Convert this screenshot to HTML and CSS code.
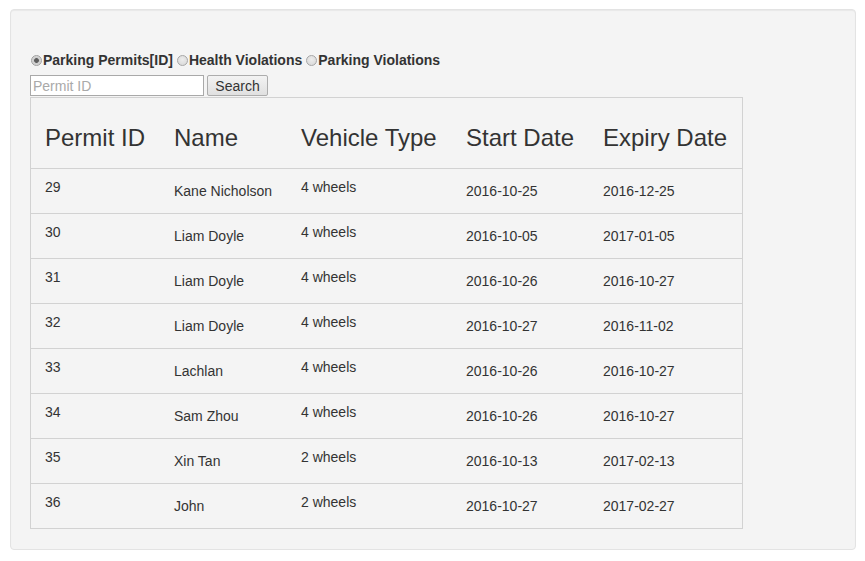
FILE: index.html
```html
<!DOCTYPE html>
<html>
<head>
<meta charset="utf-8">
<link rel="stylesheet" href="styles.css">
</head>
<body>
<div class="page">
  <div class="well">
    <form class="search-form">
      <div class="radios">
        <label class="opt"><input type="radio" name="kind" checked><span>Parking Permits[ID]</span></label>
        <label class="opt"><input type="radio" name="kind"><span>Health Violations</span></label>
        <label class="opt"><input type="radio" name="kind"><span>Parking Violations</span></label>
      </div>
      <div class="query">
        <input class="field" type="text" placeholder="Permit ID">
        <button class="btn" type="button">Search</button>
      </div>
    </form>
    <table class="permits">
      <colgroup>
        <col class="w1"><col class="w2"><col class="w3"><col class="w4"><col class="w5">
      </colgroup>
      <thead>
        <tr>
          <th class="c-id">Permit ID</th>
          <th>Name</th>
          <th class="c-type">Vehicle Type</th>
          <th>Start Date</th>
          <th>Expiry Date</th>
        </tr>
      </thead>
      <tbody>
        <tr><td class="c-id top">29</td><td class="mid">Kane Nicholson</td><td class="c-type top">4 wheels</td><td class="mid">2016-10-25</td><td class="mid">2016-12-25</td></tr>
        <tr><td class="c-id top">30</td><td class="mid">Liam Doyle</td><td class="c-type top">4 wheels</td><td class="mid">2016-10-05</td><td class="mid">2017-01-05</td></tr>
        <tr><td class="c-id top">31</td><td class="mid">Liam Doyle</td><td class="c-type top">4 wheels</td><td class="mid">2016-10-26</td><td class="mid">2016-10-27</td></tr>
        <tr><td class="c-id top">32</td><td class="mid">Liam Doyle</td><td class="c-type top">4 wheels</td><td class="mid">2016-10-27</td><td class="mid">2016-11-02</td></tr>
        <tr><td class="c-id top">33</td><td class="mid">Lachlan</td><td class="c-type top">4 wheels</td><td class="mid">2016-10-26</td><td class="mid">2016-10-27</td></tr>
        <tr><td class="c-id top">34</td><td class="mid">Sam Zhou</td><td class="c-type top">4 wheels</td><td class="mid">2016-10-26</td><td class="mid">2016-10-27</td></tr>
        <tr><td class="c-id top">35</td><td class="mid">Xin Tan</td><td class="c-type top">2 wheels</td><td class="mid">2016-10-13</td><td class="mid">2017-02-13</td></tr>
        <tr><td class="c-id top">36</td><td class="mid">John</td><td class="c-type top">2 wheels</td><td class="mid">2016-10-27</td><td class="mid">2017-02-27</td></tr>
      </tbody>
    </table>
  </div>
</div>
</body>
</html>
```

FILE: styles.css
```css
html, body {
  margin: 0;
  padding: 0;
  background: #ffffff;
}

body {
  font-family: "Liberation Sans", Arial, Helvetica, sans-serif;
  font-size: 14px;
  line-height: 20px;
  color: #333333;
}

.page {
  padding: 9px 9px 12px 10px;
}

.well {
  background: #f4f4f4;
  border: 1px solid #e3e3e3;
  border-radius: 4px;
  box-shadow: inset 0 1px 1px rgba(0, 0, 0, 0.05);
  padding: 40px 19px 20px 19px;
}

.search-form {
  margin: 0;
}

.radios {
  display: flex;
  align-items: center;
  height: 20px;
  font-weight: bold;
  color: #333333;
}

.opt {
  display: flex;
  align-items: center;
  margin-right: 3px;
}

.opt input {
  -webkit-appearance: none;
  appearance: none;
  width: 11px;
  height: 11px;
  margin: 0 1px 0 1px;
  border: 1px solid #a6a6a6;
  border-radius: 50%;
  background: radial-gradient(circle at 50% 40%, #ececec 0%, #d6d6d6 100%);
  box-sizing: border-box;
}

.opt input:checked {
  background: radial-gradient(circle, #5e5e5e 0, #5e5e5e 2px, #cbcbcb 2.8px, #e4e4e4 100%);
  border-color: #a0a0a0;
}

.query {
  display: flex;
  align-items: flex-start;
  gap: 3px;
  margin-top: 5px;
  height: 21px;
}

.field {
  width: 174px;
  height: 21px;
  box-sizing: border-box;
  border: 1px solid #a9a9a9;
  background: #ffffff;
  padding: 0 2px;
  margin: 0;
  font-family: "Liberation Sans", Arial, sans-serif;
  font-size: 14px;
  color: #333333;
}

.field::placeholder {
  color: #a9a9a9;
}

.btn {
  width: 61px;
  height: 21px;
  box-sizing: border-box;
  margin: 0;
  padding: 0;
  border: 1px solid #adadad;
  border-radius: 2px;
  background: linear-gradient(#f3f3f3, #e0e0e0);
  font-family: "Liberation Sans", Arial, sans-serif;
  font-size: 14px;
  color: #333333;
}

.permits {
  table-layout: fixed;
  width: 713px;
  margin-top: 1px;
  border-collapse: separate;
  border-spacing: 0;
  border: 1px solid #d2d2d2;
}

.w1 { width: 128px; }
.w2 { width: 128px; }
.w3 { width: 164px; }
.w4 { width: 137px; }
.w5 { width: 154px; }

.permits th {
  font-size: 24px;
  font-weight: normal;
  line-height: 26px;
  text-align: left;
  padding: 27px 0 17px 15px;
  white-space: nowrap;
  color: #333333;
}

.permits tbody tr {
  height: 45px;
}

.permits td {
  border-top: 1px solid #d2d2d2;
  padding: 0 0 0 15px;
  font-size: 14px;
  line-height: 20px;
  white-space: nowrap;
}

.permits td.top {
  vertical-align: top;
  padding-top: 8px;
}

.permits td.mid {
  vertical-align: middle;
}

.permits .c-id,
.permits .c-type {
  padding-left: 14px;
}
```
